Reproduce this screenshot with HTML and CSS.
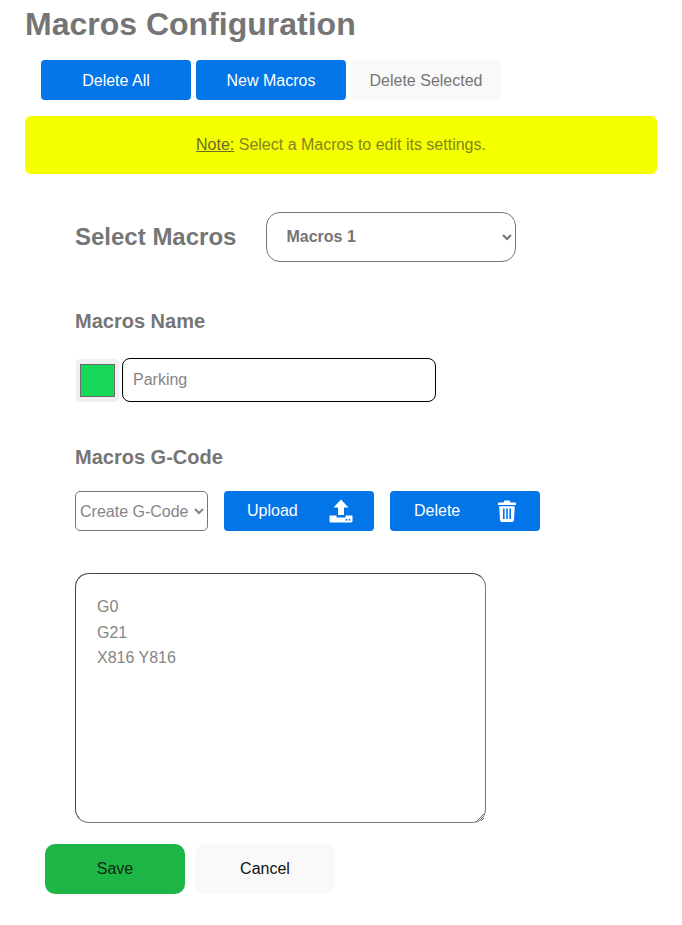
FILE: index.html
```html
<!DOCTYPE html>
<html lang="en">
  <head>
    <meta charset="UTF-8" />
    <title>Macros Configuration</title>
    <link rel="stylesheet" href="styles.css">
  </head>
  <body>
    <h1>Macros Configuration</h1>
    <div class="topknapper">
      <button class="knap blaa">Delete All</button>
      <button class="knap blaa">New Macros</button>
      <button class="knap lys">Delete Selected</button>
    </div>
    <p class="note"><u>Note:</u> Select a Macros to edit its settings.</p>

    <section class="indhold">
      <div class="vaelg">
        <h2>Select Macros</h2>
        <select class="macrovalg">
          <option>Macros 1</option>
        </select>
      </div>

      <h3 class="navn-titel">Macros Name</h3>
      <div class="navn-raekke">
        <span class="farve"><span class="farve-felt"></span></span>
        <input class="navn" type="text" placeholder="Parking">
      </div>

      <h3 class="gcode-titel">Macros G-Code</h3>
      <div class="gcode-raekke">
        <select class="gcodevalg">
          <option>Create G-Code</option>
        </select>
        <button class="knap blaa ikonknap upload">
          Upload
          <svg width="24" height="24" viewBox="0 0 24 24" fill="#fff">
            <path d="M12 0.5 L19.5 8.5 H15 V16 H9 V8.5 H4.5 Z"/>
            <path d="M0.5 16.5 H7.5 V18.5 H16.5 V16.5 H23.5 V22 Q23.5 23.5 22 23.5 H2 Q0.5 23.5 0.5 22 Z"/>
            <rect x="16.5" y="20" width="1.6" height="1.6" fill="#0275e8"/>
            <rect x="19.5" y="20" width="1.6" height="1.6" fill="#0275e8"/>
          </svg>
        </button>
        <button class="knap blaa ikonknap slet">
          Delete
          <svg width="18" height="22" viewBox="0 0 18 22" fill="#fff">
            <path d="M6.5 0.5 H11.5 L12.5 2.5 H17 Q18 2.5 18 3.5 V5 H0 V3.5 Q0 2.5 1 2.5 H5.5 Z"/>
            <path fill-rule="evenodd" d="M1.2 6.2 H16.8 L16 20 Q15.9 22 14 22 H4 Q2.1 22 2 20 Z M5 8.5 V19 H6.6 V8.5 Z M8.2 8.5 V19 H9.8 V8.5 Z M11.4 8.5 V19 H13 V8.5 Z"/>
          </svg>
        </button>
      </div>

      <textarea class="kode">G0
G21
X816 Y816</textarea>
    </section>

    <div class="bundknapper">
      <button class="knap gem">Save</button>
      <button class="knap annuller">Cancel</button>
    </div>
  </body>
</html>
```

FILE: styles.css
```css
* {
  box-sizing: border-box;
  margin: 0;
}

body {
  padding: 0 25px;
  font-family: "Liberation Sans", Arial, sans-serif;
  color: #757575;
  background-color: white;
}

h1 {
  font-size: 32px;
  line-height: 37px;
  padding-top: 6px;
  font-weight: bold;
  color: #757575;
}

/*----knapper----*/
.knap {
  border: none;
  border-radius: 4px;
  font-family: inherit;
  font-size: 16px;
}

.blaa {
  background-color: #0275e8;
  color: white;
}

.lys {
  background-color: #f9f9f9;
  color: #757575;
}

.topknapper {
  display: flex;
  gap: 5px;
  margin: 17px 0 0 16px;
}

.topknapper .knap {
  width: 150px;
  height: 40px;
  padding-top: 2px;
}

/*----note----*/
.note {
  margin-top: 16px;
  width: 632px;
  height: 58px;
  line-height: 57px;
  text-align: center;
  font-size: 16px;
  color: #858520;
  background-color: #f4ff00;
  border-radius: 6px;
}

.note u {
  color: #6c6c28;
}

/*----indhold----*/
.indhold {
  padding-left: 50px;
}

.vaelg {
  display: flex;
  align-items: center;
  gap: 30px;
  margin-top: 38px;
}

h2 {
  font-size: 24px;
  color: #757575;
}

.macrovalg {
  width: 250px;
  height: 50px;
  padding: 0 0 2px 15px;
  border: 1px solid #757575;
  border-radius: 14px;
  background-color: white;
  color: #757575;
  font-family: inherit;
  font-size: 16px;
  font-weight: bold;
}

h3 {
  font-size: 20px;
  line-height: 23px;
  color: #757575;
}

.navn-titel {
  margin-top: 48px;
}

.navn-raekke {
  display: flex;
  align-items: center;
  gap: 3px;
  margin-top: 25px;
}

.farve {
  display: flex;
  align-items: center;
  justify-content: center;
  width: 43px;
  height: 43px;
  margin-left: 1px;
  background-color: #f0f0f0;
  border-radius: 4px;
}

.farve-felt {
  width: 35px;
  height: 33px;
  background-color: #17d858;
  border: 1px solid #6b6b6b;
}

.navn {
  width: 314px;
  height: 44px;
  padding-left: 10px;
  border: 1px solid black;
  border-radius: 8px;
  font-family: inherit;
  font-size: 16px;
}

.navn::placeholder {
  color: #858585;
}

.gcode-titel {
  margin-top: 44px;
}

.gcode-raekke {
  display: flex;
  gap: 16px;
  margin-top: 22px;
}

.gcodevalg {
  width: 133px;
  height: 40px;
  border: 1px solid #757575;
  border-radius: 5px;
  background-color: white;
  color: #858585;
  font-family: inherit;
  font-size: 16px;
}

.ikonknap {
  display: flex;
  align-items: center;
  justify-content: space-between;
  width: 150px;
  height: 40px;
}

.upload {
  padding: 0 21px 0 23px;
}

.slet {
  padding: 0 24px 0 24px;
}

.kode {
  display: block;
  width: 411px;
  height: 250px;
  margin-top: 42px;
  padding: 20px 21px;
  border: 1px solid #757575;
  border-top-color: #444;
  border-left-color: #444;
  border-radius: 14px;
  color: #858585;
  font-family: inherit;
  font-size: 16px;
  line-height: 25.5px;
}

/*----bund----*/
.bundknapper {
  display: flex;
  gap: 10px;
  margin: 21px 0 0 20px;
}

.bundknapper .knap {
  width: 140px;
  height: 50px;
  border-radius: 10px;
}

.gem {
  background-color: #1db546;
  color: #0b2a12;
}

.annuller {
  background-color: #f9f9f9;
  color: #111;
}
```
